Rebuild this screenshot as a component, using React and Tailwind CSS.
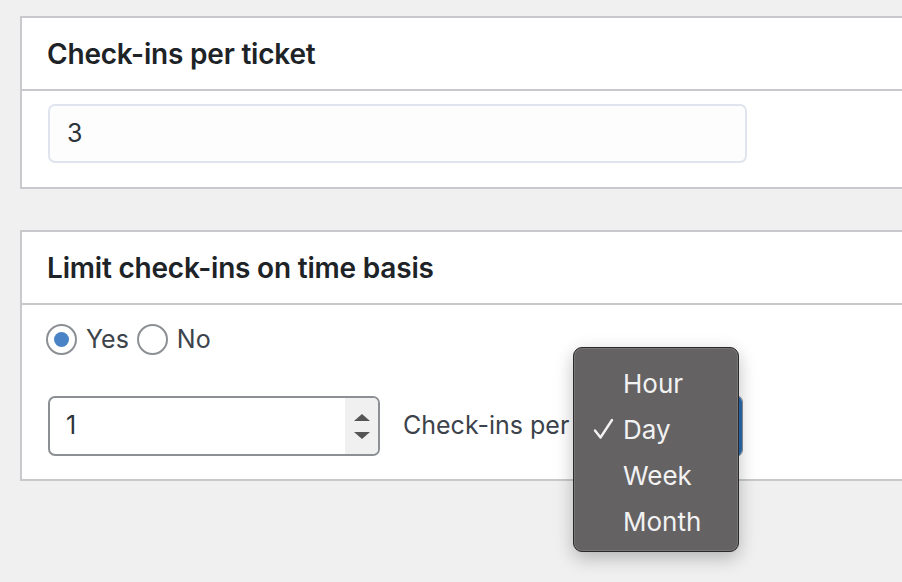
import { useState } from "react";

const font = { fontFamily: "Inter, 'Noto Sans', sans-serif" };

function Panel({ title, children }) {
  return (
    <div className="bg-white border-2 border-r-0 border-[#c8c9cc]">
      <div className="h-[73px] flex items-center pl-[25px] border-b-2 border-[#c8c9cc]">
        <h2 className="text-[28px] font-semibold text-[#1d2327] tracking-[-0.2px]">
          {title}
        </h2>
      </div>
      {children}
    </div>
  );
}

function Radio({ checked, label }) {
  return (
    <label className="h-[31px] flex items-center gap-[9px]">
      <span className="w-[31px] h-[31px] rounded-full border-2 border-[#8c8f94] bg-white flex items-center justify-center">
        {checked && <span className="w-[15px] h-[15px] rounded-full bg-[#4a84c6]" />}
      </span>
      <span className="text-[25px] leading-none text-[#3c434a]">{label}</span>
    </label>
  );
}

export default function App() {
  const [unit] = useState("Day");
  const units = ["Hour", "Day", "Week", "Month"];

  return (
    <div className="relative min-h-[582px] bg-[#f0f0f0] pt-[16px] pl-[20px] overflow-hidden" style={font}>
      <Panel title="Check-ins per ticket">
        <div className="pt-[13px] pb-[24px] pl-[26px]">
          <div className="w-[699px] h-[59px] rounded-[7px] border-2 border-[#dfe4ee] bg-[#fdfdfe] flex items-center pl-[17px] text-[25px] text-[#2c3338]">
            3
          </div>
        </div>
      </Panel>

      <div className="mt-[41px]">
        <Panel title="Limit check-ins on time basis">
          <div className="pt-[19px] pb-[23px] pl-[24px]">
            <div className="flex items-center gap-[8px]">
              <Radio checked label="Yes" />
              <Radio label="No" />
            </div>
            <div className="mt-[41px] ml-[2px] h-[60px] flex items-center">
              <div className="w-[332px] h-[60px] rounded-[7px] border-2 border-[#8c8f94] bg-white flex overflow-hidden">
                <div className="flex-1 flex items-center pl-[16px] text-[25px] text-[#2c3338]">1</div>
                <div className="w-[33px] bg-[#f0f0f0] flex flex-col items-center justify-center gap-[11px]">
                  <span className="w-0 h-0 border-l-[8px] border-r-[8px] border-b-[7px] border-l-transparent border-r-transparent border-b-[#555]" />
                  <span className="w-0 h-0 border-l-[8px] border-r-[8px] border-t-[7px] border-l-transparent border-r-transparent border-t-[#555]" />
                </div>
              </div>
              <span className="ml-[23px] w-[170px] shrink-0 whitespace-nowrap text-[25px] text-[#3c434a]">Check-ins per</span>
              <div className="w-[170px] h-[62px] rounded-[7px] border border-[#8c8f94] bg-white flex justify-end overflow-hidden">
                <div className="w-[22px] bg-[#2c6cb0]" />
              </div>
            </div>
          </div>
        </Panel>
      </div>

      <div className="absolute left-[573px] top-[347px] w-[166px] h-[205px] rounded-[9px] bg-[#656264] border border-[#2b2a2b] shadow-[0_6px_18px_rgba(0,0,0,0.25),inset_0_0_0_1px_rgba(255,255,255,0.12)] pt-[12px]">
        {units.map((u) => (
          <div key={u} className="relative h-[46px] flex items-center pl-[49px] text-[26px] text-[#f2f2f2]">
            {u === unit && (
              <svg className="absolute left-[19px] top-[12px]" width="21" height="22" viewBox="0 0 21 22">
                <path d="M2 12.5 L7.5 19.5 L19 2" fill="none" stroke="#f2f2f2" strokeWidth="2.4" strokeLinecap="round" strokeLinejoin="round" />
              </svg>
            )}
            {u}
          </div>
        ))}
      </div>
    </div>
  );
}
